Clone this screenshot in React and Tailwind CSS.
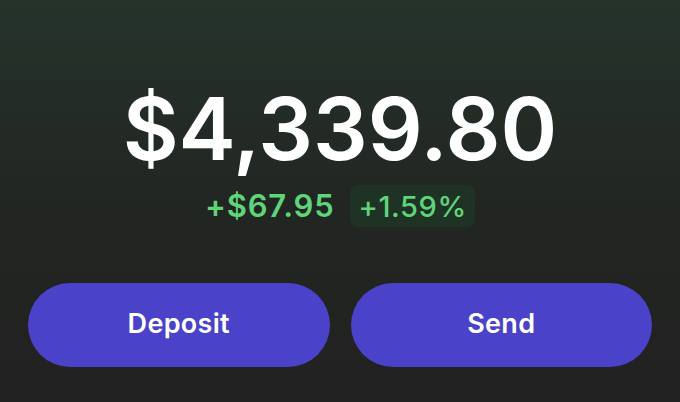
export default function App() {
  return (
    <div
      className="w-[680px] h-[402px] flex flex-col items-center bg-gradient-to-b from-[#25332b] via-[#222622] to-[#212121] text-white"
      style={{ fontFamily: 'Inter, "Noto Sans", sans-serif' }}
    >
      <div className="mt-[79px] text-[86px] leading-[100px] font-semibold">$4,339.80</div>
      <div className="mt-[4px] flex items-center gap-[16px]">
        <span className="text-[31px] font-semibold tracking-[0.8px] text-[#5fd47a]">+$67.95</span>
        <span className="h-[42px] px-[8px] flex items-center rounded-[8px] bg-[#1f3324] text-[29px] font-medium tracking-[0.6px] text-[#5fd47a]">+1.59%</span>
      </div>
      <div className="mt-[53px] w-full px-[28px] flex gap-[21px]">
        <button className="flex-1 h-[84px] rounded-full bg-[#4a42c8] text-[27px] font-semibold tracking-[0.3px] text-white">Deposit</button>
        <button className="flex-1 h-[84px] rounded-full bg-[#4a42c8] text-[27px] font-semibold tracking-[0.3px] text-white">Send</button>
      </div>
    </div>
  );
}
